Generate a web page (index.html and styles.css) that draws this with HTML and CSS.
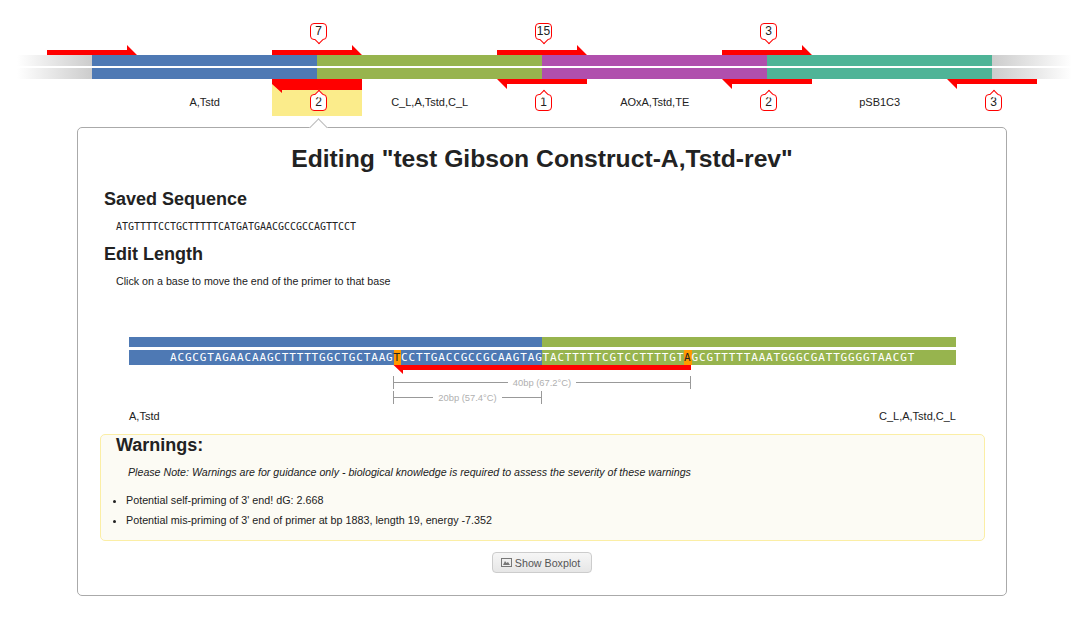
FILE: index.html
```html
<!DOCTYPE html>
<html lang="en">
<head>
  <meta charset="UTF-8">
  <title>Edit Primer</title>
  <link rel="stylesheet" href="styles.css">
</head>
<body>

  <!-- construct overview -->
  <div class="construct">
    <div class="selected-slot"></div>

    <div class="strand">
      <div class="seg fade-in"></div>
      <div class="seg blue"></div>
      <div class="seg green"></div>
      <div class="seg purple"></div>
      <div class="seg teal"></div>
      <div class="seg fade-out"></div>
    </div>
    <div class="strand">
      <div class="seg fade-in"></div>
      <div class="seg blue"></div>
      <div class="seg green"></div>
      <div class="seg purple"></div>
      <div class="seg teal"></div>
      <div class="seg fade-out"></div>
    </div>

    <div class="part-names">
      <div>A,Tstd</div>
      <div>C_L,A,Tstd,C_L</div>
      <div>AOxA,Tstd,TE</div>
      <div>pSB1C3</div>
    </div>

    <svg class="primers" width="1089" height="127">
      <polygon points="47,50 127,50 127,45 137,55 47,55"/>
      <polygon points="272,50 352,50 352,45 362,55 272,55"/>
      <polygon points="497,50 577,50 577,45 587,55 497,55"/>
      <polygon points="722,50 802,50 802,45 812,55 722,55"/>
      <polygon points="272,79 362,79 362,90 282,90 282,93 272,84"/>
      <polygon points="497,79 587,79 587,84 507,84 507,89"/>
      <polygon points="722,79 812,79 812,84 732,84 732,89"/>
      <polygon points="947,79 1037,79 1037,84 957,84 957,89"/>
    </svg>

    <div class="pin pin-up" style="left: 310px">7</div>
    <div class="pin pin-up" style="left: 535px">15</div>
    <div class="pin pin-up" style="left: 760px">3</div>
    <div class="pin pin-down" style="left: 310px">2</div>
    <div class="pin pin-down" style="left: 535px">1</div>
    <div class="pin pin-down" style="left: 760px">2</div>
    <div class="pin pin-down" style="left: 985px">3</div>
  </div>

  <div class="panel">
    <h1>Editing "test Gibson Construct-A,Tstd-rev"</h1>

    <h3>Saved Sequence</h3>
    <p class="saved-seq">ATGTTTTCCTGCTTTTTCATGATGAACGCCGCCAGTTCCT</p>

    <h3>Edit Length</h3>
    <p class="hint">Click on a base to move the end of the primer to that base</p>

    <div class="editor">
      <div class="top-strip">
        <div class="blue half-left"></div>
        <div class="green half-right"></div>
      </div>
      <div class="bases">
        <div class="blue half-left">ACGCGTAGAACAAGCTTTTTGGCTGCTAAG<span class="mark">T</span>CCTTGACCGCCGCAAGTAG</div>
        <div class="green half-right">TACTTTTTCGTCCTTTTGT<span class="mark">A</span>GCGTTTTTAAATGGGCGATTGGGGTAACGT</div>
      </div>
      <svg class="edit-arrow" width="827" height="10">
        <polygon points="264.5,0 562,0 562,5 274,5 274,9"/>
      </svg>
      <div class="dim" style="width: 298px"><span>40bp (67.2°C)</span></div>
      <div class="dim" style="width: 149px"><span>20bp (57.4°C)</span></div>
      <div class="editor-names">
        <div>A,Tstd</div>
        <div>C_L,A,Tstd,C_L</div>
      </div>
    </div>

    <div class="warnings">
      <h3>Warnings:</h3>
      <p class="note">Please Note: Warnings are for guidance only - biological knowledge is required to assess the severity of these warnings</p>
      <ul>
        <li>Potential self-priming of 3' end! dG: 2.668</li>
        <li>Potential mis-priming of 3' end of primer at bp 1883, length 19, energy -7.352</li>
      </ul>
    </div>

    <div class="actions">
      <button class="btn">
        <svg width="11" height="9" viewBox="0 0 11 9">
          <rect x="0.5" y="0.5" width="10" height="8" fill="#eee" stroke="#777"/>
          <polygon points="2,7 4,3 5.5,5 7,4 9,7" fill="#777"/>
        </svg>
        Show Boxplot
      </button>
    </div>
  </div>

</body>
</html>
```

FILE: styles.css
```css
body {
  margin: 0;
  background-color: #fff;
  color: #222;
  font-family: "Liberation Sans", Arial, sans-serif;
  font-size: 11px;
}

.blue { background-color: #4e79b4; }
.green { background-color: #97b44e; }
.purple { background-color: #b04fad; }
.teal { background-color: #4eb497; }

/* construct overview */
.construct {
  position: relative;
  height: 127px;
  padding-top: 55px;
  box-sizing: border-box;
}

.strand {
  display: flex;
  height: 11px;
  margin-bottom: 2px;
  margin-left: 17px;
}

.seg {
  width: 225px;
}

.fade-in {
  width: 75px;
  background: linear-gradient(to right, #fff, #ccc);
}

.fade-out {
  width: 80px;
  background: linear-gradient(to right, #ccc, #fff);
}

.part-names {
  display: flex;
  margin-left: 92.2px;
  margin-top: 15px;
  line-height: 16px;
}

.part-names div {
  width: 225px;
  text-align: center;
}

.selected-slot {
  position: absolute;
  left: 272px;
  top: 79px;
  width: 90px;
  height: 37px;
  background-color: #fbec8b;
}

.primers {
  position: absolute;
  left: 0;
  top: 0;
  fill: #f00;
}

.pin {
  position: absolute;
  width: 17px;
  height: 17px;
  box-sizing: border-box;
  border: 1px solid #f00;
  border-radius: 4px;
  background-color: #fff;
  font-size: 12px;
  line-height: 15px;
  text-align: center;
}

.pin::after {
  content: "";
  position: absolute;
  left: 5px;
  width: 5px;
  height: 5px;
  background-color: #fff;
  transform: rotate(45deg);
}

.pin-up { top: 23px; }
.pin-down { top: 94px; }

.pin-up::after {
  bottom: -4px;
  border-right: 1px solid #f00;
  border-bottom: 1px solid #f00;
}

.pin-down::after {
  top: -4px;
  border-left: 1px solid #f00;
  border-top: 1px solid #f00;
}

/* edit panel */
.panel {
  position: relative;
  width: 930px;
  margin-left: 77px;
  padding-bottom: 22px;
  box-sizing: border-box;
  border: 1px solid #aaa;
  border-radius: 5px;
  background-color: #fff;
}

.panel::before {
  content: "";
  position: absolute;
  left: 234px;
  top: -7px;
  width: 13px;
  height: 13px;
  box-sizing: border-box;
  border-left: 1px solid #bbb;
  border-top: 1px solid #bbb;
  background-color: #fff;
  transform: rotate(45deg);
}

h1 {
  position: relative;
  margin: 16px 0 13px;
  font-size: 24.7px;
  line-height: 30px;
  text-align: center;
}

h3 {
  margin: 0 0 5px 26px;
  font-size: 18px;
  line-height: 24px;
}

.saved-seq {
  margin: 0 0 6px 38px;
  padding-top: 1px;
  height: 19px;
  font-family: "DejaVu Sans Mono", monospace;
  font-size: 9.97px;
  line-height: 20px;
}

.hint {
  margin: 0 0 46px 38px;
  font-size: 10.7px;
  line-height: 20px;
}

.editor {
  margin-left: 51px;
  width: 827px;
}

.top-strip {
  display: flex;
  height: 10px;
  margin-bottom: 3px;
}

.half-left {
  width: 413px;
}

.half-right {
  width: 414px;
}

.bases {
  display: flex;
  height: 15px;
  color: #fff;
  font-family: "DejaVu Sans Mono", monospace;
  font-size: 11px;
  letter-spacing: 0.83px;
  line-height: 15px;
  white-space: nowrap;
}

.bases .half-left {
  box-sizing: border-box;
  padding-left: 41px;
}

.bases .half-right {
  box-sizing: border-box;
  padding-left: 0.5px;
}

.mark {
  display: inline-block;
  height: 15px;
  background-color: #f90;
  color: #222;
}

.edit-arrow {
  display: block;
  height: 11px;
  fill: #f00;
}

.dim {
  display: flex;
  justify-content: center;
  align-items: center;
  height: 13px;
  margin-left: 264px;
  margin-bottom: 2px;
  box-sizing: border-box;
  border-left: 1px solid #999;
  border-right: 1px solid #999;
  background: linear-gradient(#999, #999) center / 100% 1px no-repeat;
  color: #b0b0b0;
  font-size: 9.4px;
  line-height: 13px;
}

.dim span {
  padding: 0 5px;
  background-color: #fff;
}

.editor-names {
  display: flex;
  justify-content: space-between;
  margin-top: 2px;
  line-height: 20px;
}

.warnings {
  height: 107px;
  margin: 8px 21px 0 22px;
  box-sizing: border-box;
  border: 1px solid #fbeea5;
  border-radius: 5px;
  background-color: #fcfbf4;
}

.warnings h3 {
  margin: 0 0 0 15px;
  line-height: 20px;
}

.note {
  margin: 7px 0 0 27px;
  font-size: 10.65px;
  font-style: italic;
  line-height: 20px;
}

.warnings ul {
  margin: 8px 0 0;
  padding-left: 25px;
}

.warnings li {
  font-size: 10.75px;
  line-height: 20px;
}

.actions {
  margin-top: 11px;
  text-align: center;
}

.btn {
  display: inline-flex;
  align-items: center;
  justify-content: center;
  gap: 3px;
  width: 100px;
  height: 21px;
  padding: 0 3px 0 0;
  border: 1px solid #ccc;
  border-radius: 4px;
  background: linear-gradient(#f6f6f6, #e6e6e6);
  color: #555;
  font-family: "Liberation Sans", Arial, sans-serif;
  font-size: 10.7px;
}
```
